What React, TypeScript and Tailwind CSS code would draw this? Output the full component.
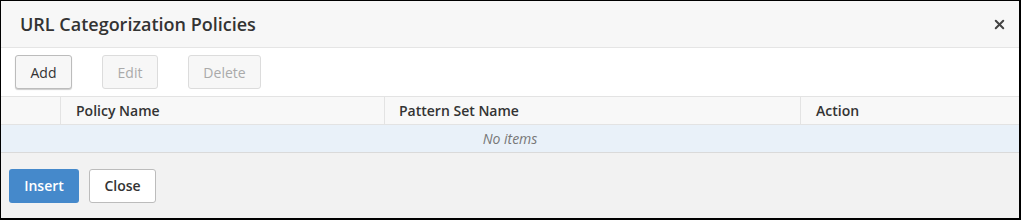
import { X } from 'lucide-react'

const font = { fontFamily: '"Open Sans", "Liberation Sans", sans-serif' }

export default function App() {
  return (
    <div className="h-[221px] w-[1021px] bg-white" style={font}>
      <div className="flex h-[220px] w-[1021px] flex-col border-t border-l border-r-2 border-b-2 border-black bg-white">
        {/* header */}
        <div className="flex h-[47px] shrink-0 items-center justify-between border-b border-[#e5e5e5] bg-[#f7f7f7] pl-[19px] pr-[12px]">
          <h1 className="text-[18px] font-semibold text-[#333]">URL Categorization Policies</h1>
          <X className="h-[15px] w-[15px] text-[#444]" strokeWidth={3.2} />
        </div>

        {/* toolbar */}
        <div className="flex h-[48px] shrink-0 items-center gap-[30px] pl-[14px]">
          <button className="h-[34px] w-[57px] rounded-[3px] border border-[#bcbcbc] bg-[#f7f7f7] text-[14px] text-[#333] shadow-[0_1px_1px_rgba(0,0,0,0.2)]">
            Add
          </button>
          <button className="h-[34px] w-[56px] rounded-[3px] border border-[#dcdcdc] bg-[#f7f7f7] text-[14px] text-[#aaa]">
            Edit
          </button>
          <button className="h-[34px] w-[73px] rounded-[3px] border border-[#dcdcdc] bg-[#f7f7f7] text-[14px] text-[#aaa]">
            Delete
          </button>
        </div>

        {/* table */}
        <div className="shrink-0 border-t border-[#e3e3e3]">
          <div className="flex h-[28px] items-center border-b border-[#e3e3e3] bg-[#f8f8f8] text-[14px] font-semibold text-[#333]">
            <div className="h-full w-[60px] border-r border-[#e3e3e3]" />
            <div className="flex h-full w-[324px] items-center border-r border-[#e3e3e3] pl-[15px]">Policy Name</div>
            <div className="flex h-full w-[416px] items-center border-r border-[#e3e3e3] pl-[14px]">Pattern Set Name</div>
            <div className="flex h-full flex-1 items-center pl-[15px]">Action</div>
          </div>
          <div className="flex h-[28px] items-center justify-center border-b border-[#dadada] bg-[#e9f1f9] text-[14px] italic text-[#777]">
            No items
          </div>
        </div>

        {/* footer */}
        <div className="flex flex-1 items-center gap-[10px] bg-[#f2f2f2] pl-[8px]">
          <button className="h-[34px] w-[70px] rounded-[3px] bg-[#4589cb] text-[14px] font-semibold text-white">
            Insert
          </button>
          <button className="h-[34px] w-[67px] rounded-[3px] border border-[#bcbcbc] bg-white text-[14px] font-semibold text-[#333]">
            Close
          </button>
        </div>
      </div>
    </div>
  )
}
